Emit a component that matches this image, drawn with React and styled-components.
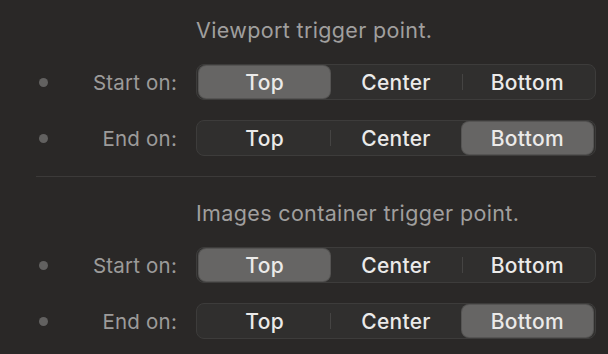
import React, { useState } from 'react';
import styled, { createGlobalStyle } from 'styled-components';

const GlobalStyle = createGlobalStyle`
  html, body {
    margin: 0;
    padding: 0;
    background: #2a2827;
  }
  body {
    font-family: Inter, "Noto Sans", sans-serif;
    -webkit-font-smoothing: antialiased;
  }
`;

const Panel = styled.div`
  width: 608px;
  height: 354px;
  box-sizing: border-box;
  padding: 18px 12px 0 36px;
  background: #2a2827;
  overflow: hidden;
`;

const Section = styled.section`
  display: flex;
  flex-direction: column;
  gap: 20px;
`;

const Title = styled.div`
  margin-left: 160px;
  margin-bottom: 2px;
  height: 24px;
  line-height: 24px;
  font-size: 21.5px;
  letter-spacing: 0.35px;
  color: #a09f9e;
`;

const Divider = styled.hr`
  margin: 20px 0 24px;
  border: 0;
  height: 1px;
  background: #3c3a39;
`;

const Row = styled.div`
  display: flex;
  align-items: center;
  height: 36px;
`;

const Dot = styled.span`
  width: 9px;
  height: 9px;
  margin-left: 3px;
  border-radius: 50%;
  background: #626160;
  flex: none;
`;

const Label = styled.span`
  flex: 1;
  text-align: right;
  margin-right: 19px;
  font-size: 20.5px;
  letter-spacing: 0.2px;
  color: #9c9b9a;
`;

const Segmented = styled.div`
  width: 400px;
  height: 36px;
  box-sizing: border-box;
  display: grid;
  grid-template-columns: repeat(3, 1fr);
  padding: 1px 2px;
  border: 1px solid #3d3c3b;
  border-radius: 8px;
  background: #302f2e;
`;

const Segment = styled.button`
  position: relative;
  margin: 0;
  padding: 0;
  border: 0;
  border-radius: 7px;
  font: inherit;
  font-size: 21px;
  font-weight: 500;
  letter-spacing: 0.3px;
  color: #ebeae9;
  background: ${({ active }) => (active ? '#666564' : 'transparent')};
  box-shadow: ${({ active }) => (active ? '0 0 0 1px #555453' : 'none')};
  cursor: pointer;

  &::before {
    content: '';
    position: absolute;
    left: 0;
    top: 8px;
    bottom: 8px;
    width: 1px;
    background: #454443;
    display: ${({ separator }) => (separator ? 'block' : 'none')};
  }
`;

const OPTIONS = ['Top', 'Center', 'Bottom'];

const Choice = ({ label, initial }) => {
  const [value, setValue] = useState(initial);
  const index = OPTIONS.indexOf(value);
  return (
    <Row>
      <Dot />
      <Label>{label}</Label>
      <Segmented>
        {OPTIONS.map((option, i) => (
          <Segment
            key={option}
            active={i === index}
            separator={i > 0 && i !== index && i - 1 !== index}
            onClick={() => setValue(option)}
          >
            {option}
          </Segment>
        ))}
      </Segmented>
    </Row>
  );
};

const Group = ({ title }) => (
  <Section>
    <Title>{title}</Title>
    <Choice label="Start on:" initial="Top" />
    <Choice label="End on:" initial="Bottom" />
  </Section>
);

export default function App() {
  return (
    <Panel>
      <GlobalStyle />
      <Group title="Viewport trigger point." />
      <Divider />
      <Group title="Images container trigger point." />
    </Panel>
  );
}
